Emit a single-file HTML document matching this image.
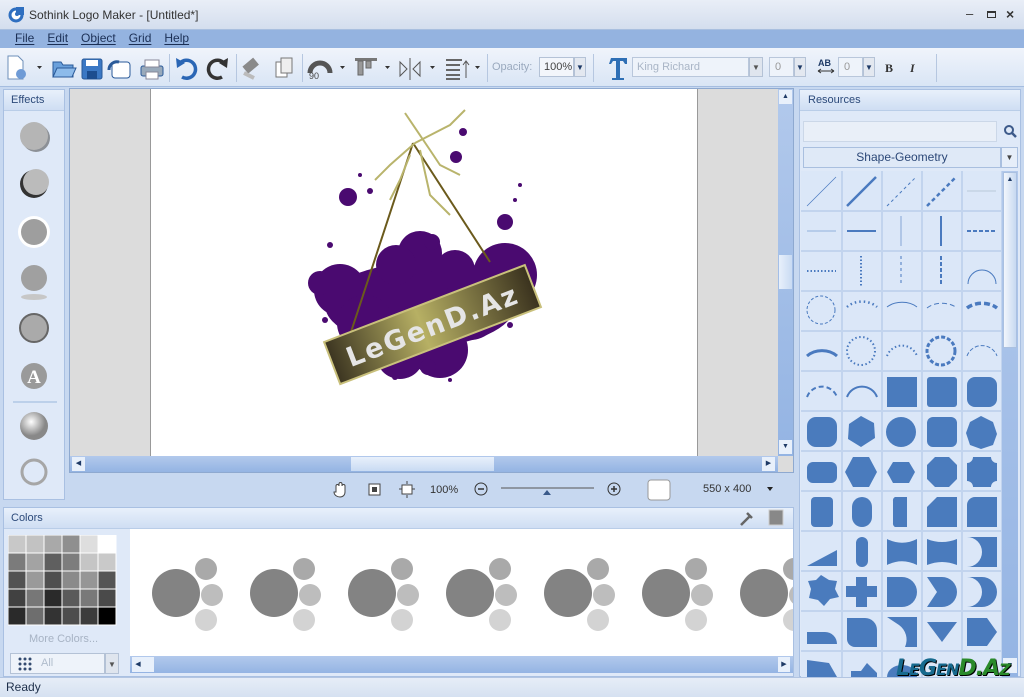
<!DOCTYPE html>
<html><head><meta charset="utf-8"><style>
*{margin:0;padding:0;box-sizing:border-box}
body{width:1024px;height:697px;overflow:hidden;background:#c7d8f0;font-family:"Liberation Sans",sans-serif;font-size:12px;color:#1e3a66;position:relative}
.a{position:absolute}
.title{left:0;top:0;width:1024px;height:30px;background:linear-gradient(#e9eef7,#d4deee);border-bottom:1px solid #a9bfdf}
.menu{left:0;top:30px;width:1024px;height:18px;background:#94b3e0}
.menu span{margin-left:15px;margin-right:-2px;font-size:12px;color:#1b2f55;text-decoration:underline;text-decoration-thickness:1px;text-underline-offset:2px}
.tb{left:0;top:48px;width:1024px;height:39px;background:linear-gradient(#f0f4fb,#d9e5f5);border-bottom:1px solid #a5bde0}
.sep{position:absolute;top:54px;width:1px;height:28px;background:#b6c7e0}
.panel{background:#dfe9f8;border:1px solid #a9c0e2}
.ph{background:linear-gradient(#e8f0fb,#cfdef3);height:21px;line-height:21px;padding-left:7px;font-size:11px;color:#2c4a7a;border-bottom:1px solid #b9cde8}
.sb{background:linear-gradient(#b2c9ec,#94b4e3)}
</style></head><body>
<div class="a title">
 <svg class="a" style="left:8px;top:7px" width="16" height="16"><circle cx="8" cy="8" r="7.5" fill="#2f6fc0"/><circle cx="8" cy="8" r="4.5" fill="#fff"/><rect x="8" y="0" width="8" height="8" fill="#2f6fc0"/><circle cx="9" cy="7" r="2" fill="#2f6fc0"/></svg>
 <span class="a" style="left:29px;top:8px;font-size:12px;color:#333">Sothink Logo Maker - [Untitled*]</span>
 <span class="a" style="left:966px;top:6px;color:#333;font-size:13px">–</span>
 <div class="a" style="left:987px;top:11px;width:9px;height:7px;border:1px solid #333;border-top-width:2px"></div>
 <span class="a" style="left:1006px;top:6px;color:#333;font-size:14px;font-weight:bold">×</span>
</div>
<div class="a menu" style="line-height:17px"><span>File</span><span>Edit</span><span>Object</span><span>Grid</span><span>Help</span></div>
<div class="a tb"></div>
<svg class="a" style="left:0;top:48px" width="1024" height="39">
 <g fill="#3b78c4" stroke="#2a5a99">
 <path d="M8 8h10l5 5v18H8z" fill="#fff" stroke="#6d8fb9"/><ellipse cx="21" cy="26" rx="5" ry="5" fill="#6f9bd6" stroke="none"/>
 <path d="M37 18l5 0-2.5 3z" stroke="none" fill="#333"/>
 <path d="M53 14h8l2 3h10v12H53z" fill="#6aa0db"/><path d="M53 29l4-9h19l-4 9z" fill="#8dbbea"/>
 <rect x="82" y="11" width="20" height="20" rx="2"/><rect x="86" y="12" width="12" height="6" fill="#fff" stroke="none"/><rect x="87" y="23" width="10" height="8" fill="#1c4d8f" stroke="none"/>
 <rect x="112" y="14" width="18" height="16" rx="3" fill="#fff"/><path d="M109 22a8 8 0 0 1 10-8" fill="none" stroke-width="3"/>
 <rect x="141" y="18" width="22" height="10" rx="2" fill="#9ab"/><rect x="145" y="12" width="14" height="7" fill="#fff" stroke="#889"/><rect x="146" y="24" width="12" height="7" fill="#fff" stroke="#889"/>
 <path d="M180 15a9 9 0 1 1 2 14" fill="none" stroke="#2a66b5" stroke-width="3.5"/><path d="M176 10l1 10 8-5z" stroke="none" fill="#2a66b5"/>
 <path d="M224 15a9 9 0 1 0 -2 14" fill="none" stroke="#333" stroke-width="3.5"/><path d="M228 10l-1 10-8-5z" stroke="none" fill="#333"/>
 </g>
 <rect x="244" y="13" width="14" height="9" transform="rotate(-40 251 18)" fill="#8a8a8a"/><path d="M244 25l10 5" stroke="#bbb" stroke-width="4"/>
 <rect x="276" y="14" width="11" height="15" fill="#fff" stroke="#777"/><rect x="281" y="10" width="11" height="15" fill="#eee" stroke="#777"/>
 <path d="M310 25a10 10 0 0 1 20 0" fill="none" stroke="#555" stroke-width="5"/><text x="309" y="31" font-size="9" fill="#444" font-family="Liberation Sans">90</text>
 <path d="M340 18l5 0-2.5 3z M385 18l5 0-2.5 3z M430 18l5 0-2.5 3z M475 18l5 0-2.5 3z" fill="#333"/>
 <rect x="355" y="10" width="22" height="3" fill="#777"/><rect x="358" y="13" width="5" height="14" fill="#999" stroke="#666"/><rect x="366" y="13" width="5" height="7" fill="#999" stroke="#666"/>
 <path d="M410 10v22M400 14l7 7-7 7zM420 14l-7 7 7 7z" fill="none" stroke="#555"/>
 <path d="M446 12h16M446 17h14M446 22h14M446 27h14M446 31h14" stroke="#666" stroke-width="2"/><path d="M466 14v16M463 17l3-4 3 4" fill="none" stroke="#555"/>
 <path d="M611 10h16v6h-2l-2-3h-3v17h4v2h-12v-2h4v-17h-3l-2 3h-2z" fill="#2e6fb5"/>
 <text x="818" y="18" font-size="9" font-weight="bold" fill="#1e3a66" font-family="Liberation Sans">AB</text><path d="M818 23h16M818 23l3-2M818 23l3 2M834 23l-3-2M834 23l-3 2" stroke="#333"/>
 <text x="885" y="24" font-size="12" font-weight="bold" fill="#333" font-family="Liberation Serif">B</text>
 <text x="910" y="24" font-size="12" font-style="italic" font-weight="bold" fill="#333" font-family="Liberation Serif">I</text>
</svg>
<div class="sep" style="left:169px"></div><div class="sep" style="left:236px"></div><div class="sep" style="left:302px"></div><div class="sep" style="left:487px"></div><div class="sep" style="left:593px"></div><div class="sep" style="left:936px"></div>
<span class="a" style="left:492px;top:61px;color:#9aa9be;font-size:11px">Opacity:</span>
<div class="a" style="left:539px;top:57px;width:35px;height:20px;background:#f3f6fb;border:1px solid #b4c2d6;font-size:11px;padding:3px 0 0 4px;color:#444">100%</div>
<div class="a" style="left:574px;top:57px;width:12px;height:20px;background:#e3e8f0;border:1px solid #b4c2d6;font-size:8px;text-align:center;padding-top:5px">▼</div>
<div class="a" style="left:632px;top:57px;width:117px;height:20px;background:#eef3fa;border:1px solid #b9c7db;font-size:11px;padding:3px 0 0 4px;color:#a9b5c6">King Richard</div>
<div class="a" style="left:749px;top:57px;width:14px;height:20px;background:#dfe5ee;border:1px solid #b4c2d6;font-size:8px;text-align:center;padding-top:5px;color:#555">▼</div>
<div class="a" style="left:769px;top:57px;width:25px;height:20px;background:#eef3fa;border:1px solid #b9c7db;font-size:11px;padding:3px 0 0 5px;color:#999">0</div>
<div class="a" style="left:794px;top:57px;width:12px;height:20px;background:#e3e8f0;border:1px solid #b4c2d6;font-size:8px;text-align:center;padding-top:5px">▼</div>
<div class="a" style="left:838px;top:57px;width:25px;height:20px;background:#eef3fa;border:1px solid #b9c7db;font-size:11px;padding:3px 0 0 5px;color:#999">0</div>
<div class="a" style="left:863px;top:57px;width:12px;height:20px;background:#e3e8f0;border:1px solid #b4c2d6;font-size:8px;text-align:center;padding-top:5px">▼</div>

<!-- effects -->
<div class="a panel" style="left:3px;top:89px;width:62px;height:411px">
 <div class="ph" style="height:21px">Effects</div>
</div>
<svg class="a" style="left:3px;top:110px" width="62" height="390">
 <defs><radialGradient id="g1" cx="0.4" cy="0.35"><stop offset="0" stop-color="#fff"/><stop offset="1" stop-color="#888"/></radialGradient></defs>
 <circle cx="33" cy="28" r="14" fill="#555" opacity="0.6"/><circle cx="31" cy="26" r="14" fill="#b5b5b5"/>
 <circle cx="31" cy="74" r="14" fill="#333"/><circle cx="33" cy="72" r="13" fill="#bbb"/>
 <circle cx="31" cy="122" r="16" fill="#fff"/><circle cx="31" cy="122" r="13" fill="#9e9e9e"/>
 <circle cx="31" cy="168" r="13" fill="#a0a0a0"/><ellipse cx="31" cy="187" rx="13" ry="3" fill="#c7c7c7"/>
 <circle cx="31" cy="218" r="14" fill="#aaa" stroke="#666" stroke-width="2"/>
 <circle cx="31" cy="266" r="13" fill="#9a9a9a"/><text x="31" y="273" text-anchor="middle" font-size="19" font-weight="bold" fill="#fff" font-family="Liberation Serif">A</text>
 <path d="M10 292h44" stroke="#9ab6dc"/>
 <circle cx="31" cy="316" r="14" fill="url(#g1)"/>
 <circle cx="31" cy="362" r="12" fill="none" stroke="#a6a6a6" stroke-width="3"/>
</svg>

<!-- canvas -->
<div class="a" style="left:69px;top:88px;width:725px;height:385px;border:1px solid #8ea9d0;background:#dcdcdc"></div>
<div class="a" style="left:150px;top:89px;width:548px;height:367px;background:#fff;border-left:1px solid #999;border-right:1px solid #999"></div>
<div class="a sb" style="left:778px;top:89px;width:15px;height:367px"></div>
<div class="a" style="left:779px;top:90px;width:13px;height:14px;background:#e8f0fb;font-size:7px;text-align:center;line-height:14px">▲</div>
<div class="a" style="left:779px;top:255px;width:13px;height:34px;background:linear-gradient(90deg,#e8f0fb,#c9dbf3)"></div>
<div class="a" style="left:779px;top:440px;width:13px;height:14px;background:#e8f0fb;font-size:7px;text-align:center;line-height:14px">▼</div>
<div class="a sb" style="left:70px;top:456px;width:708px;height:16px"></div>
<div class="a" style="left:72px;top:457px;width:13px;height:14px;background:#e8f0fb;font-size:7px;text-align:center;line-height:14px">◀</div>
<div class="a" style="left:351px;top:457px;width:143px;height:14px;background:linear-gradient(#e8f0fb,#c9dbf3)"></div>
<div class="a" style="left:762px;top:457px;width:13px;height:14px;background:#e8f0fb;font-size:7px;text-align:center;line-height:14px">▶</div>

<!-- logo -->
<svg class="a" style="left:300px;top:105px" width="250" height="290">
 <defs><linearGradient id="ban" x1="0" x2="1"><stop offset="0" stop-color="#3c3521"/><stop offset="0.45" stop-color="#b7b064"/><stop offset="1" stop-color="#3a321e"/></linearGradient></defs>
 <g fill="#4a0a70">
  <ellipse cx="120" cy="200" rx="95" ry="42"/>
  <circle cx="205" cy="170" r="32"/><circle cx="120" cy="148" r="22"/><circle cx="96" cy="160" r="20"/><circle cx="40" cy="185" r="26"/><circle cx="65" cy="218" r="28"/><circle cx="100" cy="250" r="24"/><circle cx="140" cy="245" r="28"/><circle cx="170" cy="205" r="30"/><circle cx="155" cy="165" r="20"/><circle cx="20" cy="178" r="12"/>
  <circle cx="48" cy="92" r="9"/><circle cx="132" cy="137" r="8"/><circle cx="163" cy="27" r="4"/><circle cx="156" cy="52" r="6"/><circle cx="205" cy="117" r="8"/><circle cx="108" cy="255" r="9"/><circle cx="128" cy="262" r="8"/><circle cx="70" cy="86" r="3"/>
  <circle cx="25" cy="215" r="3"/><circle cx="210" cy="220" r="3"/><circle cx="60" cy="70" r="2"/><circle cx="215" cy="95" r="2"/><circle cx="95" cy="272" r="3"/><circle cx="150" cy="275" r="2"/><circle cx="30" cy="140" r="3"/><circle cx="220" cy="80" r="2"/>
 </g>
 <path d="M113 38L190 157M113 38L50 230" stroke="#6b5a1c" stroke-width="2"/>
 <path d="M105 8L130 45L140 60L160 70M115 38L90 60L75 75M115 38L150 20L165 5M120 45L130 90L150 110M110 50L100 75L90 95" stroke="#b9b46c" stroke-width="2" fill="none"/>
 <g transform="rotate(-21 130 220)"><rect x="25" y="198" width="215" height="45" fill="url(#ban)" stroke="#c9c07c" stroke-width="2"/>
 <text x="132" y="231" text-anchor="middle" font-size="27" font-weight="bold" font-family="DejaVu Sans" fill="#e5e5e5" letter-spacing="2">LeGenD.Az</text></g>
</svg>

<!-- zoom bar -->
<svg class="a" style="left:330px;top:478px" width="460" height="24">
 <path d="M6 14v-6a1.5 1.5 0 0 1 3 0v-2a1.5 1.5 0 0 1 3 0v2a1.5 1.5 0 0 1 3 0v6c0 3-2 5-5 5s-6-2-6-5z" fill="#fff" stroke="#444"/>
 <rect x="39" y="6" width="11" height="11" fill="#fff" stroke="#444"/><rect x="42" y="9" width="5" height="5" fill="#444"/>
 <rect x="72" y="7" width="10" height="9" fill="#fff" stroke="#444"/><path d="M77 3v3M77 17v3M69 11h3M82 11h3" stroke="#444"/>
 <circle cx="151" cy="11" r="6" fill="none" stroke="#333"/><path d="M148 11h6" stroke="#333" stroke-width="1.5"/>
 <path d="M171 10h93" stroke="#555"/><path d="M213 17l4-5 4 5z" fill="#3a5a8a"/>
 <circle cx="284" cy="11" r="6" fill="none" stroke="#333"/><path d="M281 11h6M284 8v6" stroke="#333" stroke-width="1.5"/>
 <rect x="318" y="2" width="22" height="20" rx="3" fill="#fff" stroke="#999"/>
 <path d="M437 9l6 0-3 4z" fill="#222"/>
</svg>
<span class="a" style="left:430px;top:484px;font-size:11px;color:#333">100%</span>
<span class="a" style="left:703px;top:483px;font-size:11px;color:#333">550 x 400</span>

<!-- colors -->
<div class="a panel" style="left:3px;top:507px;width:791px;height:170px"><div class="ph">Colors</div></div>
<svg class="a" style="left:740px;top:509px" width="50" height="18"><path d="M1 16l9-9M7 4l5 5" stroke="#666" stroke-width="2.5"/><rect x="29" y="1" width="14" height="15" fill="#888" stroke="#666"/><rect x="29" y="1" width="14" height="15" fill="none" stroke="#ccc"/></svg>
<div class="a" style="left:130px;top:529px;width:663px;height:127px;background:#fff"></div>
<svg class="a" style="left:8px;top:535px" width="112" height="92">
 <g stroke="#fff" stroke-width="1">
 <rect x="0" y="0" width="18" height="18" fill="#c8c8c8"/><rect x="18" y="0" width="18" height="18" fill="#c2c2c2"/><rect x="36" y="0" width="18" height="18" fill="#a9a9a9"/><rect x="54" y="0" width="18" height="18" fill="#8f8f8f"/><rect x="72" y="0" width="18" height="18" fill="#dedede"/><rect x="90" y="0" width="18" height="18" fill="#fff"/>
 <rect x="0" y="18" width="18" height="18" fill="#7b7b7b"/><rect x="18" y="18" width="18" height="18" fill="#a3a3a3"/><rect x="36" y="18" width="18" height="18" fill="#5f5f5f"/><rect x="54" y="18" width="18" height="18" fill="#7d7d7d"/><rect x="72" y="18" width="18" height="18" fill="#c5c5c5"/><rect x="90" y="18" width="18" height="18" fill="#c9c9c9"/>
 <rect x="0" y="36" width="18" height="18" fill="#525252"/><rect x="18" y="36" width="18" height="18" fill="#9a9a9a"/><rect x="36" y="36" width="18" height="18" fill="#4f4f4f"/><rect x="54" y="36" width="18" height="18" fill="#8a8a8a"/><rect x="72" y="36" width="18" height="18" fill="#969696"/><rect x="90" y="36" width="18" height="18" fill="#555"/>
 <rect x="0" y="54" width="18" height="18" fill="#414141"/><rect x="18" y="54" width="18" height="18" fill="#777"/><rect x="36" y="54" width="18" height="18" fill="#2a2a2a"/><rect x="54" y="54" width="18" height="18" fill="#5a5a5a"/><rect x="72" y="54" width="18" height="18" fill="#797979"/><rect x="90" y="54" width="18" height="18" fill="#4a4a4a"/>
 <rect x="0" y="72" width="18" height="18" fill="#2a2a2a"/><rect x="18" y="72" width="18" height="18" fill="#6e6e6e"/><rect x="36" y="72" width="18" height="18" fill="#333"/><rect x="54" y="72" width="18" height="18" fill="#4d4d4d"/><rect x="72" y="72" width="18" height="18" fill="#3c3c3c"/><rect x="90" y="72" width="18" height="18" fill="#000"/>
 </g></svg>
<span class="a" style="left:29px;top:633px;font-size:11px;color:#a7b3c4">More Colors...</span>
<div class="a" style="left:10px;top:653px;width:95px;height:21px;background:#eef3fa;border:1px solid #b4c2d6"></div>
<div class="a" style="left:105px;top:653px;width:14px;height:21px;background:#dfe5ee;border:1px solid #b4c2d6;font-size:8px;text-align:center;padding-top:6px;color:#555">▼</div>
<svg class="a" style="left:18px;top:657px" width="16" height="14"><g fill="#334a70"><circle cx="2" cy="2" r="1.5"/><circle cx="7" cy="2" r="1.5"/><circle cx="12" cy="2" r="1.5"/><circle cx="2" cy="7" r="1.5"/><circle cx="7" cy="7" r="1.5"/><circle cx="12" cy="7" r="1.5"/><circle cx="2" cy="12" r="1.5"/><circle cx="7" cy="12" r="1.5"/><circle cx="12" cy="12" r="1.5"/></g></svg>
<span class="a" style="left:41px;top:657px;font-size:11px;color:#b0bccc">All</span>
<svg class="a" style="left:130px;top:529px" width="663" height="127">
 <g id="paw"><circle cx="46" cy="64" r="24" fill="#838383"/><circle cx="76" cy="40" r="11" fill="#a9a9a9"/><circle cx="82" cy="66" r="11" fill="#bdbdbd"/><circle cx="76" cy="91" r="11" fill="#d3d3d3"/></g>
 <use href="#paw" x="98"/><use href="#paw" x="196"/><use href="#paw" x="294"/><use href="#paw" x="392"/><use href="#paw" x="490"/><use href="#paw" x="588"/>
</svg>
<div class="a sb" style="left:130px;top:656px;width:663px;height:17px"></div>
<div class="a" style="left:132px;top:657px;width:12px;height:15px;background:#e8f0fb;font-size:7px;text-align:center;line-height:15px">◀</div>
<div class="a" style="left:144px;top:657px;width:10px;height:15px;background:#e8f0fb"></div>
<div class="a" style="left:778px;top:657px;width:12px;height:15px;background:#e8f0fb;font-size:7px;text-align:center;line-height:15px">▶</div>

<!-- resources -->
<div class="a panel" style="left:799px;top:89px;width:222px;height:588px"><div class="ph" style="padding-left:8px">Resources</div></div>
<div class="a" style="left:803px;top:121px;width:194px;height:21px;background:#e9eff8;border:1px solid #cbd7e8"></div>
<svg class="a" style="left:1003px;top:124px" width="14" height="14"><circle cx="6" cy="6" r="4" fill="none" stroke="#3d5a8a" stroke-width="2"/><path d="M9 9l4 4" stroke="#3d5a8a" stroke-width="2.5"/></svg>
<div class="a" style="left:803px;top:147px;width:198px;height:21px;background:#dfe9f7;border:1px solid #a9bfdf;text-align:center;line-height:19px;font-size:12px;color:#2b4777">Shape-Geometry</div>
<div class="a" style="left:1001px;top:147px;width:17px;height:21px;background:#e6eef9;border:1px solid #a9bfdf;font-size:8px;text-align:center;line-height:19px;color:#444">▼</div>
<div class="a sb" style="left:1002px;top:171px;width:16px;height:506px"></div>
<div class="a" style="left:1003px;top:172px;width:14px;height:176px;background:linear-gradient(90deg,#f2f6fc,#c7d9f1);border:1px solid #aac0e0;font-size:7px;text-align:center;line-height:14px">▲</div>
<div class="a" style="left:1003px;top:658px;width:14px;height:15px;background:#e8f0fb;font-size:7px;text-align:center;line-height:15px">▼</div>
<svg class="a" style="left:801px;top:171px" width="201" height="506">
 <rect width="201" height="506" fill="#dbe7f8"/>
 <g stroke="#c2d4ee" stroke-width="2"><path d="M41 0v506M81 0v506M121 0v506M161 0v506M201 0v506"/><path d="M0 40h201M0 80h201M0 120h201M0 160h201M0 200h201M0 240h201M0 280h201M0 320h201M0 360h201M0 400h201M0 440h201M0 480h201"/></g>
 <g stroke="#4a7abf" fill="none">
  <path d="M6 35L35 6" stroke-width="0.7"/><path d="M46 35L75 6" stroke-width="2.5"/><path d="M86 35L115 6" stroke-dasharray="3 3"/><path d="M126 35L155 6" stroke-width="2.5" stroke-dasharray="4 3"/><path d="M166 20h29" stroke-width="0.5" stroke="#9ab"/>
  <path d="M6 60h29" stroke-width="0.6"/><path d="M46 60h29" stroke-width="2"/><path d="M100 45v30" stroke-width="0.6"/><path d="M140 45v30" stroke-width="2"/><path d="M166 60h29" stroke-width="2" stroke-dasharray="4 2"/>
  <path d="M6 100h29" stroke-width="2" stroke-dasharray="1.5 2"/><path d="M60 85v30" stroke-width="2" stroke-dasharray="1.5 2"/><path d="M100 85v30" stroke-dasharray="3 3"/><path d="M140 85v30" stroke-width="2" stroke-dasharray="4 2"/><path d="M167 113a14 14 0 0 1 28 0"/>
  <circle cx="20" cy="139" r="14" stroke-dasharray="3 2"/><path d="M46 136a20 16 0 0 1 30 0" stroke-width="2.5" stroke-dasharray="1.5 3"/><path d="M86 136a20 14 0 0 1 30 0"/><path d="M126 137a20 14 0 0 1 30 0" stroke-dasharray="5 3"/><path d="M166 137a20 14 0 0 1 30 0" stroke-width="3.5" stroke-dasharray="6 3"/>
  <path d="M6 185a20 16 0 0 1 30 0" stroke-width="3"/><circle cx="60" cy="180" r="14" stroke-width="2" stroke-dasharray="1.5 2.5"/><path d="M86 185a16 16 0 0 1 30 0" stroke-width="2" stroke-dasharray="1.5 2.5"/><circle cx="140" cy="180" r="14" stroke-width="3" stroke-dasharray="4 2"/><path d="M166 185a16 16 0 0 1 30 0" stroke-dasharray="4 2"/>
  <path d="M6 226a16 16 0 0 1 30 0" stroke-width="2" stroke-dasharray="5 3"/><path d="M46 226a16 16 0 0 1 30 0" stroke-width="2"/>
 </g>
 <g fill="#4a7bbd">
  <rect x="86" y="206" width="30" height="30"/><rect x="126" y="206" width="30" height="30" rx="3"/><rect x="166" y="206" width="30" height="30" rx="8"/>
  <rect x="6" y="246" width="30" height="30" rx="9"/><path d="M60 245l13 7 1 15-14 9-13-8 1-15z"/><circle cx="100" cy="261" r="15"/><rect x="126" y="246" width="30" height="30" rx="6"/><path d="M180 245l12 6 4 12-4 11-12 4-11-4-4-12 4-11z"/>
  <rect x="6" y="291" width="30" height="21" rx="6"/><path d="M52 286h16l8 15-8 15h-16l-8-15z"/><path d="M92 291h16l6 10-6 11h-16l-6-11z"/><path d="M134 286h14l8 8v14l-8 8h-14l-8-8v-14z"/><path d="M172 286h18a6 6 0 0 0 6 6v18a6 6 0 0 0-6 6h-18a6 6 0 0 0-6-6v-18a6 6 0 0 0 6-6z"/>
  <rect x="10" y="326" width="22" height="30" rx="4"/><rect x="51" y="326" width="20" height="30" rx="10"/><path d="M94 326h12v30h-12a4 4 0 0 1-2-4v-22a4 4 0 0 1 2-4z"/><path d="M136 326h20v30h-30v-20z"/><path d="M174 326h22v30h-30v-22a8 8 0 0 1 8-8z"/>
  <path d="M6 395l30-16v16z"/><rect x="55" y="366" width="12" height="30" rx="6"/><path d="M86 368c10 5 20 5 30 0v26c-10-5-20-5-30 0z"/><path d="M126 368c10 4 20 4 30 0v26c-10-4-20-4-30 0z"/><path d="M166 366h30v30h-30a15 15 0 0 0 0-30z"/>
  <path d="M20 404l8 5 8 1-2 8 4 8-9 2-6 7-6-6-9-2 2-9-3-8 8-1z"/><path d="M55 406h11v9h10v11h-10v10h-11v-10h-10v-11h10z"/><path d="M86 406h15a15 15 0 0 1 0 30h-15z"/><path d="M126 406h15a15 15 0 0 1 0 30h-15l10-15z"/><path d="M166 406h15a15 15 0 0 1 0 30h-15a14 14 0 0 0 0-30z"/>
  <path d="M6 461h18a12 12 0 0 1 12 12h-30z"/><path d="M46 447h18a12 12 0 0 1 12 12v17h-22a8 8 0 0 1-8-8z"/><path d="M86 446h30v30h-12a18 18 0 0 0-6-22z"/><path d="M126 451h30l-15 20z"/><path d="M166 447h20l10 14-10 14h-20z"/>
  <path d="M6 489l22 3 8 14h-30z"/><path d="M50 500h10l6-8 10 10v4h-26z"/><path d="M86 506a15 12 0 0 1 30 0z"/>
 </g>
</svg>
<span class="a" style="left:896px;top:656px;font-size:22px;font-weight:bold;font-style:italic;font-family:'DejaVu Sans',sans-serif;color:#176a8e;text-shadow:1px 1px 0 #000;letter-spacing:-1px">L<span style="font-size:16px">E</span>G<span style="font-size:16px">EN</span><span style="color:#2a8a2a">D.A</span><span style="font-size:16px;color:#2a8a2a">Z</span></span>

<!-- status -->
<div class="a" style="left:0;top:677px;width:1024px;height:20px;background:linear-gradient(#e6edf7,#d6e1f1);border-top:1px solid #b2c5e2"></div>
<span class="a" style="left:6px;top:680px;font-size:12px;color:#1e2f4a">Ready</span>
</body></html>
